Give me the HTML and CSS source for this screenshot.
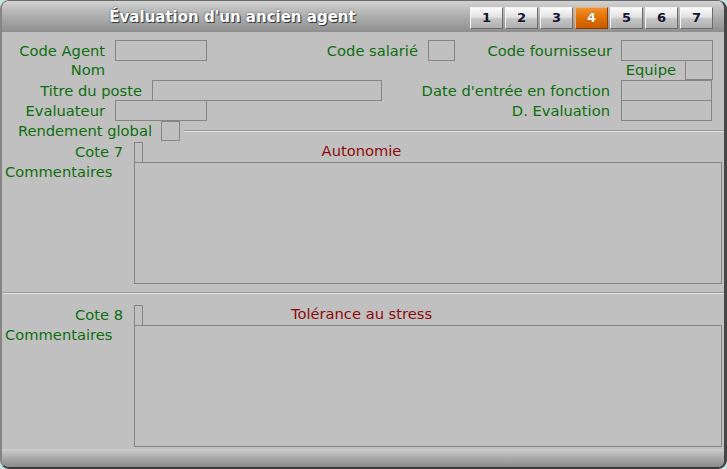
FILE: index.html
```html
<!DOCTYPE html>
<html>
<head>
<meta charset="utf-8">
<link rel="stylesheet" href="styles.css">
</head>
<body>
<div class="window">
  <div class="titlebar">
    <div class="title">Évaluation d'un ancien agent</div>
    <div class="tabs">
      <div class="tab">1</div>
      <div class="tab">2</div>
      <div class="tab">3</div>
      <div class="tab active">4</div>
      <div class="tab">5</div>
      <div class="tab">6</div>
      <div class="tab">7</div>
    </div>
  </div>
  <div class="content">
    <div class="row row1">
      <div class="lbl">Code Agent</div>
      <div class="field"></div>
      <div class="lbl">Code salarié</div>
      <div class="field"></div>
      <div class="lbl lbl9">Code fournisseur</div>
      <div class="field"></div>
    </div>
    <div class="row row2">
      <div class="lbl">Nom</div>
      <div class="lbl lbl9">Equipe</div>
      <div class="field"></div>
    </div>
    <div class="row row3">
      <div class="lbl">Titre du poste</div>
      <div class="field"></div>
      <div class="lbl lbl11">Date d'entrée en fonction</div>
      <div class="field"></div>
    </div>
    <div class="row row4">
      <div class="lbl">Evaluateur</div>
      <div class="field"></div>
      <div class="lbl lbl11">D. Evaluation</div>
      <div class="field"></div>
    </div>
    <div class="row row5">
      <div class="lbl lbl9">Rendement global</div>
      <div class="field"></div>
      <div class="groove short"></div>
    </div>

    <div class="section first">
      <div class="sec-head">
        <div class="sec-title">Autonomie</div>
        <div class="sec-left">
          <div class="lbl lbl11 cote">Cote 7</div>
          <div class="field tiny"></div>
        </div>
      </div>
      <div class="sec-body">
        <div class="comment-lbl">Commentaires</div>
        <div class="memo"></div>
      </div>
    </div>

    <div class="groove full"></div>

    <div class="section">
      <div class="sec-head">
        <div class="sec-title">Tolérance au stress</div>
        <div class="sec-left">
          <div class="lbl lbl11 cote">Cote 8</div>
          <div class="field tiny"></div>
        </div>
      </div>
      <div class="sec-body">
        <div class="comment-lbl">Commentaires</div>
        <div class="memo"></div>
      </div>
    </div>
  </div>
  <div class="bottombar"></div>
</div>
</body>
</html>
```

FILE: styles.css
```css
html, body {
  margin: 0;
  padding: 0;
}
body {
  background: #c4e4de;
  font-family: "DejaVu Sans", Verdana, sans-serif;
  font-size: 14.7px;
}
.window {
  width: 727px;
  height: 469px;
  box-sizing: border-box;
  border-radius: 9px;
  overflow: hidden;
  background: #c0c0c0;
  border-left: 2px solid #858585;
  border-right: 3px solid #454545;
  border-top: 1px solid #6a6a6a;
  border-bottom: 2px solid #3a3a3a;
  display: flex;
  flex-direction: column;
}
.titlebar {
  height: 31px;
  flex: none;
  display: flex;
  align-items: flex-start;
  background: linear-gradient(#d2d2d2, #b4b4b4 40%, #8e8e8e);
}
.title {
  width: 461px;
  text-align: center;
  color: #ffffff;
  font-weight: bold;
  font-size: 15px;
  line-height: 18px;
  padding-top: 7px;
  text-shadow: 1px 1px 0 #3a3a3a, 0 0 2px #555;
}
.tabs {
  display: flex;
  gap: 2px;
  padding-top: 6px;
  margin-left: 7px;
}
.tab {
  width: 31px;
  height: 20px;
  border: 1px solid;
  border-color: #f4f4f4 #6c6c6c #6c6c6c #f4f4f4;
  background: linear-gradient(#fbfbfb, #e2e2e2 45%, #c4c4c4 55%, #b0b0b0);
  color: #141430;
  font-weight: bold;
  font-size: 13px;
  line-height: 20px;
  text-align: center;
}
.tab.active {
  background: linear-gradient(#f29030, #e07000 50%, #c85c00);
  border-color: #f8b070 #8a3c00 #8a3c00 #f8b070;
  color: #ffffff;
  text-shadow: 0 0 1px #703000;
}
.content {
  flex: 1;
  padding-top: 8px;
  color: #0e6e0e;
}
.row {
  display: grid;
  height: 20px;
  align-items: center;
}
.row1 { grid-template-columns: 113px 92px 221px 27px 166px 92px; }
.row2 { grid-template-columns: 113px 570px 28px; }
.row3 { grid-template-columns: 150px 230px 239px 91px; }
.row4 { grid-template-columns: 113px 92px 414px 91px; }
.row5 {
  display: flex;
  height: 21px;
}
.lbl {
  box-sizing: border-box;
  text-align: right;
  padding-right: 10px;
  white-space: nowrap;
  line-height: 20px;
}
.lbl9 { padding-right: 9px; }
.lbl11 { padding-right: 11px; }
.row5 .lbl { width: 159px; flex: none; }
.row5 .field { width: 19px; height: 20px; flex: none; }
.field {
  height: 20px;
  box-sizing: border-box;
  border: 1px solid #858585;
}
.row1 .field, .row3 .field, .row4 .field { height: 21px; }
.groove {
  height: 0;
  border-top: 1px solid #999999;
  border-bottom: 1px solid #e2e2e2;
}
.groove.short {
  flex: 1;
  margin-left: 4px;
}
.groove.full {
  margin-left: 1px;
  margin-top: 8px;
}
.section {
  padding-top: 11px;
}
.section.first {
  padding-top: 1px;
}
.sec-head {
  display: grid;
  height: 20px;
}
.sec-title, .sec-left {
  grid-area: 1 / 1;
}
.sec-title {
  color: #8e0a0a;
  text-align: center;
  line-height: 18px;
  padding-right: 3px;
}
.sec-left {
  display: flex;
}
.cote {
  width: 132px;
}
.field.tiny {
  width: 9px;
  height: 21px;
}
.sec-body {
  display: flex;
}
.comment-lbl {
  width: 129px;
  padding-left: 3px;
  line-height: 19px;
}
.memo {
  width: 588px;
  height: 122px;
  box-sizing: border-box;
  border: 1px solid #858585;
}
.bottombar {
  height: 18px;
  flex: none;
  background: linear-gradient(#cdcdcd, #b0b0b0 40%, #8a8a8a);
}
```
